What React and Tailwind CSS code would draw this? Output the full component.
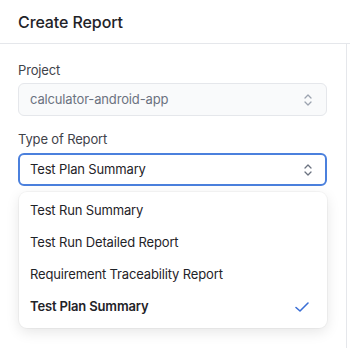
import React from "react";

function UpDown({ className }) {
  return (
    <svg width="10" height="14" viewBox="0 0 10 14" fill="none" className={className}>
      <path d="M2 5L5 2L8 5" stroke="currentColor" strokeWidth="1.3" strokeLinecap="round" strokeLinejoin="round" />
      <path d="M2 9L5 12L8 9" stroke="currentColor" strokeWidth="1.3" strokeLinecap="round" strokeLinejoin="round" />
    </svg>
  );
}

function Check() {
  return (
    <svg width="16" height="12" viewBox="0 0 16 12" fill="none">
      <path d="M2 6.5L6 10L14 2" stroke="#3b6fd6" strokeWidth="1.6" strokeLinecap="round" strokeLinejoin="round" />
    </svg>
  );
}

export default function App() {
  const items = [
    { label: "Test Run Summary" },
    { label: "Test Run Detailed Report" },
    { label: "Requirement Traceability Report" },
    { label: "Test Plan Summary", selected: true },
  ];
  return (
    <div className="w-[350px] h-[348px] bg-white overflow-hidden" style={{ fontFamily: "Inter, 'Noto Sans', sans-serif" }}>
      <div className="h-[44px] flex items-center px-[18px] border-b border-[#e5e7eb]">
        <span className="text-[16px] font-medium text-[#1f2328] tracking-[-0.1px]">Create Report</span>
      </div>
      <div className="w-[347px] h-[304px] border-r border-[#e5e7eb] px-[18px] pt-[16px] tracking-[-0.15px]">
        <div className="text-[13px] leading-[20px] text-[#3f434a]">Project</div>
        <div className="mt-[3px] w-[309px] h-[33px] rounded-[6px] border border-[#e5e7eb] bg-[#f9fafb] flex items-center justify-between pl-[11px] pr-[13px]">
          <span className="text-[13px] text-[#6b7280]">calculator-android-app</span>
          <UpDown className="text-[#9ca3af]" />
        </div>
        <div className="mt-[13px] text-[13px] leading-[20px] text-[#3f434a]">Type of Report</div>
        <div className="relative mt-[4px]">
          <div className="w-[309px] h-[33px] rounded-[6px] border-2 border-[#4b80dd] bg-white flex items-center justify-between pl-[10px] pr-[12px]">
            <span className="text-[13px] text-[#1f2328]">Test Plan Summary</span>
            <UpDown className="text-[#6b7280]" />
          </div>
          <div className="absolute left-[1px] top-[39px] w-[308px] rounded-[8px] bg-white shadow-[0_4px_14px_rgba(0,0,0,0.10),0_0_0_1px_rgba(0,0,0,0.03)] pt-[3px] pb-[5px]">
            {items.map((it) => (
              <div key={it.label} className="h-[32px] flex items-center justify-between pl-[11px] pr-[17px]">
                <span className={"text-[13px] text-[#1f2328] " + (it.selected ? "font-semibold" : "")}>{it.label}</span>
                {it.selected && <Check />}
              </div>
            ))}
          </div>
        </div>
      </div>
    </div>
  );
}
